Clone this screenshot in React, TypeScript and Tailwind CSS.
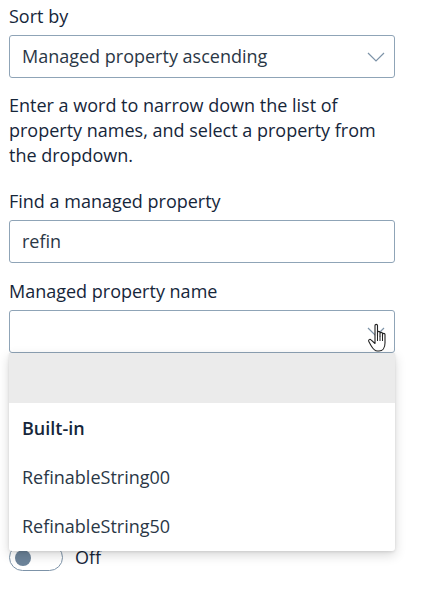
import React from 'react'

function Chevron() {
  return (
    <svg width="18" height="10" viewBox="0 0 18 10" className="shrink-0">
      <path d="M1 1 L9 9 L17 1" fill="none" stroke="#7d93a8" strokeWidth="1.2" />
    </svg>
  )
}

function HandCursor() {
  return (
    <svg width="26" height="32" viewBox="0 0 26 32" className="absolute right-[2px] top-[12px]">
      <path
        d="M8 3.5 C8 2 10.5 2 10.5 3.5 L10.5 14 L10.5 10.5 C10.5 9 13 9 13 10.5 L13 14 L13 11.5 C13 10 15.5 10 15.5 11.5 L15.5 14.5 L15.5 12.5 C15.5 11 18 11 18 12.5 L18 21 C18 26 15.5 29 12 29 L10.5 29 C7.5 29 6 27 4 23.5 L1.8 19.5 C1 18 2.8 16.5 4 17.8 L8 21.5 Z"
        fill="#ffffff"
        stroke="#222"
        strokeWidth="1.1"
        strokeLinejoin="round"
      />
      <path d="M10.5 14 L10.5 19 M13 14 L13 19 M15.5 14.5 L15.5 19" stroke="#222" strokeWidth="1" />
    </svg>
  )
}

export default function App() {
  return (
    <div className="w-[422px] h-[599px] bg-white overflow-hidden text-[#16263a]" style={{ fontFamily: '"Segoe UI", "Open Sans", "Noto Sans", sans-serif' }}>
      <div className="px-[9px] pr-[27px] pt-[3px]">
        <div className="text-[18px] leading-[26px]">Sort by</div>
        <div className="mt-[6px] h-[43px] border border-[#8fa4b7] rounded-[3px] flex items-center justify-between pl-[12px] pr-[9px]">
          <span className="text-[18px] text-[#2a3746]">Managed property ascending</span>
          <Chevron />
        </div>

        <p className="mt-[15px] text-[18px] leading-[25px]">
          Enter a word to narrow down the list of property names, and select a property from the dropdown.
        </p>

        <div className="mt-[20px] text-[18px] leading-[26px]">Find a managed property</div>
        <div className="mt-[6px] h-[43px] border border-[#8fa4b7] rounded-[3px] flex items-center pl-[12px]">
          <span className="text-[18px] text-[#2a3746]">refin</span>
        </div>

        <div className="mt-[15px] text-[18px] leading-[26px]">Managed property name</div>
        <div className="relative">
          <div className="mt-[6px] h-[43px] border border-[#8fa4b7] rounded-[3px] flex items-center justify-end pr-[9px]">
            <Chevron />
          </div>
          <HandCursor />

          <div className="absolute left-0 right-0 top-[43px] bg-white rounded-b-[3px] shadow-[0_4px_12px_rgba(0,0,0,0.16),0_1px_3px_rgba(0,0,0,0.1)] z-10">
            <div className="h-[50px] bg-[#ebebeb]" />
            <div className="h-[50px] flex items-center pl-[13px] text-[18px] font-semibold text-[#16263a]">Built-in</div>
            <div className="h-[49px] flex items-center pl-[13px] text-[18px] text-[#2a3746]">RefinableString00</div>
            <div className="h-[49px] flex items-center pl-[13px] text-[18px] text-[#2a3746]">RefinableString50</div>
          </div>

          <div className="mt-[191px] flex items-center gap-[12px]">
            <div className="w-[54px] h-[27px] rounded-full border border-[#7d93a8] flex items-center pl-[5px]">
              <div className="w-[16px] h-[16px] rounded-full bg-[#6d849a]" />
            </div>
            <span className="text-[18px]">Off</span>
          </div>
        </div>
      </div>
    </div>
  )
}
